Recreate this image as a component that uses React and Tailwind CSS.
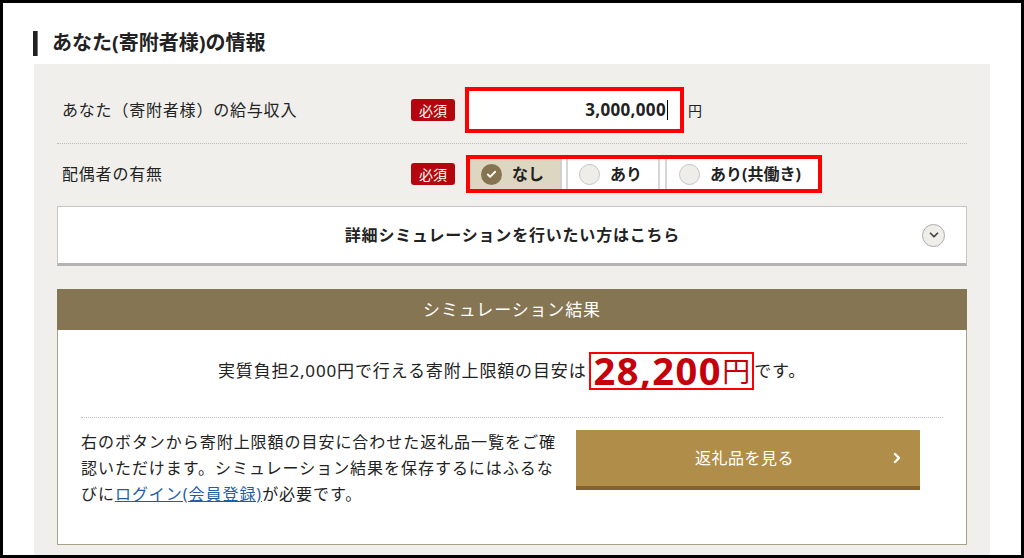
import { Check, ChevronDown, ChevronRight } from 'lucide-react'

const RequiredBadge = () => (
  <span className="w-[44px] h-[22px] flex items-center justify-center bg-[#b3060d] text-white text-[14px] rounded-[3px] shrink-0">
    必須
  </span>
)

function RadioOption({ label, checked, className = '' }) {
  return (
    <div className={`flex items-center h-full ${checked ? 'bg-[#ddd6c1]' : 'bg-white'} ${className}`}>
      {checked ? (
        <span className="w-[21px] h-[21px] rounded-full bg-[#85744f] flex items-center justify-center shrink-0">
          <Check size={11} strokeWidth={4} className="text-white" />
        </span>
      ) : (
        <span className="w-[21px] h-[21px] rounded-full bg-[#eeede9] border border-[#c4c4c4] shrink-0" />
      )}
      <span className="ml-[10px] text-[16px] font-bold text-[#222]">{label}</span>
    </div>
  )
}

export default function App() {
  return (
    <div className="w-[1024px] h-[558px] border-[3px] border-black bg-white overflow-hidden font-['Noto_Sans','Noto_Sans_CJK_JP',sans-serif] text-[#222]">

      {/* Section heading */}
      <div className="flex items-center pl-[30px] pt-[19px] h-[61px]">
        <span className="w-[5px] h-[25px] bg-[#222] border-r border-[#777]" />
        <h2 className="ml-[14px] text-[20px] font-bold leading-none">あなた(寄附者様)の情報</h2>
      </div>

      {/* Gray panel */}
      <div className="ml-[31px] w-[956px] bg-[#f0efeb] px-[23px] pt-[23px] pb-[60px]">

        {/* Salary row */}
        <div className="flex items-center px-[5px] pb-[10px]">
          <p className="w-[349px] text-[16px] tracking-[0.05em]">あなた（寄附者様）の給与収入</p>
          <RequiredBadge />
          <div className="ml-[10px] w-[219px] h-[46px] border-4 border-[#f00] bg-white flex items-center justify-end pr-[12px]">
            <span className="text-[17px] font-bold tracking-[0.02em]">3,000,000</span>
            <span className="w-px h-[20px] bg-black ml-[1px]" />
          </div>
          <span className="ml-[4px] text-[14px]">円</span>
        </div>

        <div className="border-t border-dotted border-[#bdbdbd]" />

        {/* Spouse row */}
        <div className="flex items-center px-[5px] pt-[11px]">
          <p className="w-[349px] text-[16px] tracking-[0.05em]">配偶者の有無</p>
          <RequiredBadge />
          <div className="ml-[11px] w-[356px] h-[38px] border-4 border-[#f00] bg-white flex">
            <RadioOption label="なし" checked className="w-[92px] pl-[11px] border-r-2 border-[#d0d0d0]" />
            <RadioOption label="あり" className="ml-[4px] w-[94px] pl-[11px] border-x-2 border-[#d6d6d6]" />
            <RadioOption label="あり(共働き)" className="ml-[5px] flex-1 pl-[12px] border-l-2 border-[#d6d6d6]" />
          </div>
        </div>

        {/* Detail accordion */}
        <div className="mt-[13px] h-[60px] bg-white border border-[#c6c6c6] border-b-[3px] border-b-[#b4b4b4] flex items-center">
          <span className="w-[45px]" />
          <p className="flex-1 text-center text-[16px] font-bold tracking-[0.05em]">詳細シミュレーションを行いたい方はこちら</p>
          <span className="mr-[21px] w-[23px] h-[23px] rounded-full bg-[#efeee9] border border-[#adadad] flex items-center justify-center">
            <ChevronDown size={14} strokeWidth={3} className="text-[#444]" />
          </span>
        </div>

        {/* Simulation result */}
        <div className="mt-[23px]">
          <div className="h-[41px] bg-[#857553] flex items-center justify-center text-white text-[17px] tracking-[0.05em]">
            シミュレーション結果
          </div>
          <div className="bg-white border border-t-0 border-[#a9a08a] px-[23px] pt-[22px] pb-[37px]">
            <div className="flex items-center justify-center">
              <span className="text-[17px] tracking-[0.05em]">実質負担2,000円で行える寄附上限額の目安は</span>
              <span className="ml-[3px] h-[38px] border-2 border-[#f00] flex items-end px-[2px] text-[#c5000b] font-bold">
                <span className="text-[38px] leading-[36px] tracking-[0.04em]">28,200</span>
                <span className="text-[28px] leading-[34px] font-normal">円</span>
              </span>
              <span className="text-[17px] tracking-[0.05em]">です。</span>
            </div>

            <div className="mt-[27px] border-t border-dotted border-[#c4c4c4]" />

            <div className="flex items-start pt-[11px]">
              <p className="w-[476px] text-[16px] leading-[26px] tracking-[0.06em] whitespace-nowrap">
                右のボタンから寄附上限額の目安に合わせた返礼品一覧をご確<br />
                認いただけます。シミュレーション結果を保存するにはふるな<br />
                びに<a href="#" className="text-[#1e5fa3] underline">ログイン(会員登録)</a>が必要です。
              </p>
              <button className="ml-[19px] mt-[1px] w-[344px] h-[60px] bg-[#b08e4a] border-b-4 border-[#83632f] flex items-center text-white">
                <span className="w-[24px]" />
                <span className="flex-1 text-center text-[16px] tracking-[0.03em]">返礼品を見る</span>
                <ChevronRight size={16} strokeWidth={3.5} className="mr-[15px]" />
              </button>
            </div>
          </div>
        </div>

      </div>
    </div>
  )
}
